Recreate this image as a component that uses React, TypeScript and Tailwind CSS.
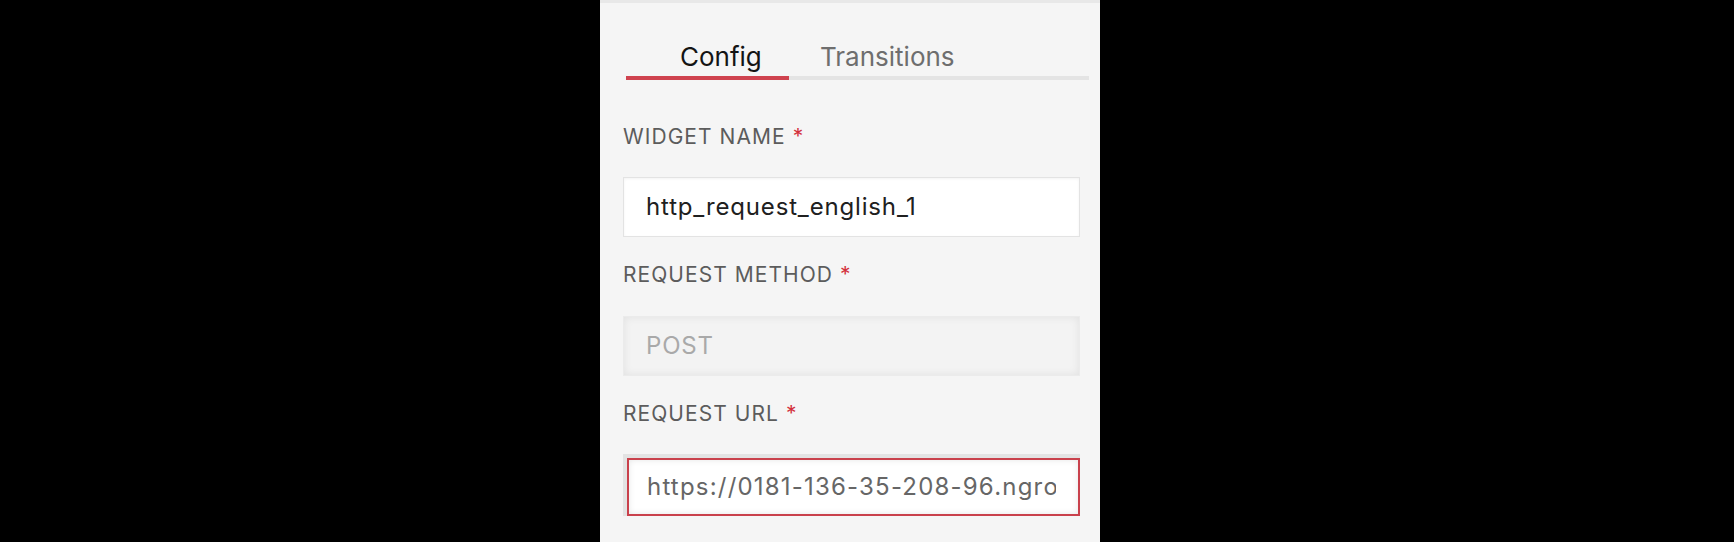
import React from 'react';

/**
 * Widget config panel (HTTP request widget)
 */

const FONT = "font-['Inter','Roboto',sans-serif]";

function FieldLabel({ text, className }: { text: string; className?: string }) {
  return (
    <div
      className={`h-[24px] leading-[24px] text-[21px] tracking-[0.05em] text-[#5c5c5c] ${className ?? ''}`}
    >
      {text} <span className="text-[#d3303c]">*</span>
    </div>
  );
}

export default function App() {
  return (
    <div className={`w-full h-[542px] bg-black ${FONT}`}>
      <div className="ml-[600px] w-[500px] h-full bg-[#f5f5f5] border-t-[3px] border-[#e8e8e8] pl-[23px] pr-[20px]">
        {/* tabs */}
        <div className="mt-[34px] ml-[3px] mr-[-9px] flex items-end border-b-[4px] border-[#e4e4e4] relative">
          <button className="w-[163px] pl-[54px] text-left h-[39px] leading-[24px] text-[26px] text-[#141414] relative">
            Config
            <span className="absolute left-0 right-0 bottom-[-4px] h-[4px] bg-[#cf434f]" />
          </button>
          <button className="ml-[31px] h-[39px] leading-[24px] text-[26px] text-[#6e6e6e] text-left">
            Transitions
          </button>
        </div>

        {/* widget name */}
        <FieldLabel text="WIDGET NAME" className="mt-[45px]" />
        <div className="mt-[28px] h-[60px] bg-white border border-[#e3e3e3] shadow-[inset_0_1px_3px_rgba(0,0,0,0.05)] flex items-center px-[22px]">
          <span className="text-[24px] tracking-[0.035em] text-[#202020]">http_request_english_1</span>
        </div>

        {/* request method */}
        <FieldLabel text="REQUEST METHOD" className="mt-[26px]" />
        <div className="mt-[29px] h-[60px] bg-[#f3f3f3] border border-[#ebebeb] shadow-[inset_0_0_8px_rgba(0,0,0,0.08)] flex items-center px-[22px]">
          <span className="text-[24px] tracking-[0.035em] text-[#a9a9a9]">POST</span>
        </div>

        {/* request url */}
        <FieldLabel text="REQUEST URL" className="mt-[26px]" />
        <div className="mt-[28px] h-[62px] bg-[#e3e3e3] pt-[4px] pl-[4px]">
          <div className="h-full bg-white border-2 border-[#c9414c] shadow-[inset_0_0_6px_rgba(0,0,0,0.1)] flex items-center pl-[18px] pr-[22px]">
            <div className="overflow-hidden whitespace-nowrap text-[24px] tracking-[0.05em] text-[#666666]">
              https://0181-136-35-208-96.ngrok.io/webhook
            </div>
          </div>
        </div>
      </div>
    </div>
  );
}
